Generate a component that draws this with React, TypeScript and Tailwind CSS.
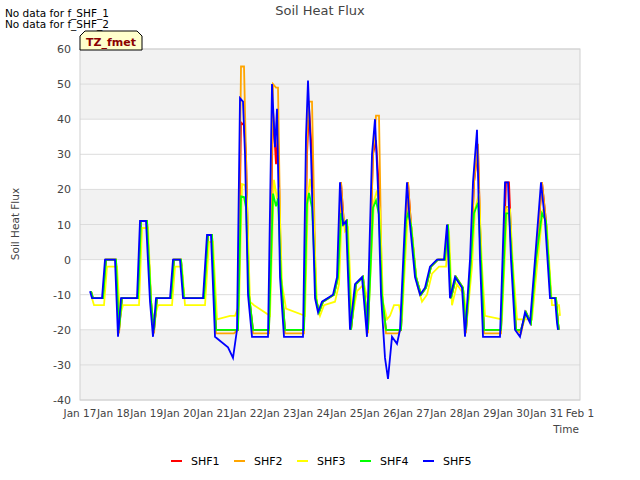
const L = 80, R = 580, T = 49, B = 400;
const vy = (v: number) => T + (60 - v) * ((B - T) / 100);

const blue: [number, number][] = [
  [90, -9], [92, -11], [102, -11], [105, 0], [115, 0], [118, -22], [121, -11], [137, -11], [140, 11], [146, 11], [150, -12], [153, -22], [156, -11], [170, -11], [173, 0], [180, 0], [183, -11], [203, -11], [207, 7], [211, 7], [215, -22], [228, -25], [233, -28], [237, -20], [240, 46], [243, 45], [245, 30], [248, -10], [252, -22], [268, -22], [272, 50], [275, 32], [277, 43], [280, -5], [284, -22], [303, -22], [306, 35], [308, 51], [311, 30], [315, -11], [318, -15], [322, -12], [333, -10], [337, -5], [340, 22], [343, 10], [346, 11], [350, -20], [355, -7], [362, -5], [367, -22], [372, 30], [375, 40], [378, 20], [381, -10], [385, -28], [388, -34], [392, -22], [397, -24], [400, -20], [405, 11], [407, 22], [410, 10], [415, -5], [420, -10], [425, -8], [430, -2], [437, 0], [444, 0], [447, 10], [450, -11], [455, -5], [462, -8], [465, -22], [470, 0], [473, 22], [477, 37], [480, 0], [483, -22], [500, -22], [505, 22], [508, 22], [511, 0], [515, -20], [520, -22], [525, -15], [530, -18], [535, 0], [541, 22], [545, 11], [550, -11], [555, -11], [557, -18], [558, -20],
];

const peaks: Record<number, number> = { 242: 55, 276: 49, 310: 45, 376: 41, 476: 33, 507: 15 };

const series = (f: (x: number, v: number) => number, dx = 0) =>
  blue.map(([x, v]) => `${x + dx},${vy(f(x, v)).toFixed(1)}`).join(" ");

const red = series((x, v) => (v > 30 ? v * 0.85 : v < -20 ? -20 : v), 1);
const orange = series((x, v) => {
  for (const k in peaks) if (Math.abs(+k - x) <= 2 && v > 10) return peaks[k];
  return v < -20 ? -21 : v;
}, 1);
const yellow = series((x, v) => (v > 11 ? 11 + (v - 11) * 0.3 : v < -11 ? -17 + ((x * 7) % 5) : v - 2), 2);
const green = series((x, v) => (v > 11 ? 11 + (v - 11) * 0.2 : v < -11 ? Math.max(v, -20) : v), 1);
const bluePts = series((x, v) => v);

const yTicks = [60, 50, 40, 30, 20, 10, 0, -10, -20, -30, -40];
const days = ["Jan 17", "Jan 18", "Jan 19", "Jan 20", "Jan 21", "Jan 22", "Jan 23", "Jan 24", "Jan 25", "Jan 26", "Jan 27", "Jan 28", "Jan 29", "Jan 30", "Jan 31", "Feb 1"];
const legend = [["SHF1", "#ff0000"], ["SHF2", "#ffa500"], ["SHF3", "#ffff00"], ["SHF4", "#00ff00"], ["SHF5", "#0000ff"]];

export default function App() {
  return (
    <div className="w-[640px] h-[480px] bg-white" style={{ fontFamily: "'DejaVu Sans', sans-serif" }}>
      <svg width="640" height="480" className="block">
        <text x="320" y="15" textAnchor="middle" fontSize="13" fill="#444">Soil Heat Flux</text>
        <text x="5" y="17" fontSize="10.5" fill="#000">No data for f_SHF_1</text>
        <text x="5" y="28" fontSize="10.5" fill="#000">No data for f_SHF_2</text>

        <rect x={L} y={vy(60)} width={R - L} height={vy(40) - vy(60)} fill="#f2f2f2" />
        <rect x={L} y={vy(20)} width={R - L} height={vy(0) - vy(20)} fill="#f2f2f2" />
        <rect x={L} y={vy(-20)} width={R - L} height={vy(-40) - vy(-20)} fill="#f2f2f2" />
        {yTicks.map((t) => (
          <g key={t}>
            <line x1={L} x2={R} y1={vy(t)} y2={vy(t)} stroke="#dcdcdc" strokeWidth="1" />
            <text x={L - 9} y={vy(t) + 4} textAnchor="end" fontSize="11" fill="#444">{t}</text>
          </g>
        ))}
        <rect x={L} y={T} width={R - L} height={B - T} fill="none" stroke="#d0d0d0" />
        {days.map((d, i) => (
          <text key={d} x={L + i * 33.33} y="417" textAnchor="middle" fontSize="10.5" fill="#444">{d}</text>
        ))}
        <text x="566" y="433" textAnchor="middle" fontSize="10.5" fill="#444">Time</text>
        <text transform="translate(19 224) rotate(-90)" textAnchor="middle" fontSize="10.5" fill="#444">Soil Heat Flux</text>

        <polyline points={red} fill="none" stroke="#ff0000" strokeWidth="1.8" />
        <polyline points={orange} fill="none" stroke="#ffa500" strokeWidth="1.8" />
        <polyline points={yellow} fill="none" stroke="#ffff00" strokeWidth="1.8" />
        <polyline points={green} fill="none" stroke="#00ff00" strokeWidth="1.8" />
        <polyline points={bluePts} fill="none" stroke="#0000ff" strokeWidth="1.8" />

        <path d="M80 50 L80 36 L85 31 L137 31 L142 36 L142 50 Z" fill="#ffffcc" stroke="#000" strokeWidth="1" />
        <text x="111" y="46" textAnchor="middle" fontSize="11" fontWeight="bold" fill="#8b0000">TZ_fmet</text>

        {legend.map(([n, c], i) => (
          <g key={n}>
            <line x1={171 + i * 63} x2={182 + i * 63} y1="461" y2="461" stroke={c} strokeWidth="2" />
            <text x={191 + i * 63} y="465" fontSize="11" fill="#000">{n}</text>
          </g>
        ))}
      </svg>
    </div>
  );
}
